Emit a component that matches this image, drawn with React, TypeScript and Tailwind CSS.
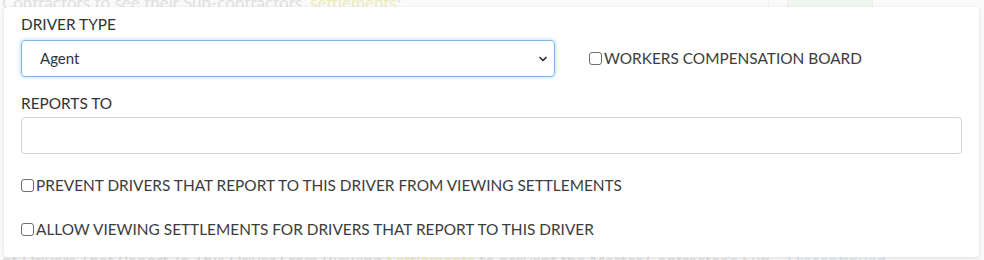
import { ChevronDown } from 'lucide-react';

// Checkbox row used three times in the form.
function CheckRow({ label }: { label: string }) {
  return (
    <label className="flex items-center gap-[2px] text-[15.4px] leading-[18px] text-[#3c3c3c]">
      <span className="inline-block w-[13px] h-[13px] rounded-[3px] border border-[#6e6e6e] bg-white" />
      <span>{label}</span>
    </label>
  );
}

export default function App() {
  return (
    <div
      className="relative w-[984px] h-[260px] overflow-hidden bg-[#fafafa]"
      style={{ fontFamily: 'Lato, "Open Sans", sans-serif' }}
    >
      {/* faded page behind the popover */}
      <div className="absolute left-[2px] top-[-7px] text-[17px] leading-[20px] text-[#e0e0e0] whitespace-nowrap">
        Contractors to see their Sub-contractors' <span className="text-[#eaedbb]">settlements</span>:
      </div>
      <div className="absolute left-[787px] top-[-12px] w-[86px] h-[24px] rounded-md bg-[#eef6f1] border border-[#e4efe8]" />
      <div className="absolute left-[768px] top-0 w-px h-[260px] bg-[#f0f0f0]" />
      <div className="absolute left-[2px] top-[251px] text-[17px] leading-[20px] text-[#e0e0e0] whitespace-nowrap">
        nt Drivers That Report To This Driver From Viewing <span className="text-[#eaedbb]">Settlements</span> to prevent the Master Contractor's Sub
      </div>
      <div className="absolute left-[787px] top-[251px] text-[17px] leading-[20px] text-[#dbe3f0]">Discontinued</div>

      {/* popover card */}
      <div className="absolute left-[4px] top-[7px] w-[975px] h-[250px] bg-white rounded-[4px] shadow-[0_1px_4px_rgba(0,0,0,0.12)] px-[17px] pt-[8px] flex flex-col">
        <div className="flex items-start">
          <div className="w-[534px] flex flex-col">
            <div className="text-[15.4px] leading-[18px] text-[#333] mb-[7px]">DRIVER TYPE</div>
            <div className="h-[37px] rounded-[4px] border border-[#7db6e8] shadow-[0_0_4px_rgba(102,175,233,0.55)] flex items-center pl-[18px] pr-[5px]">
              <span className="flex-1 text-[15px] text-[#333]">Agent</span>
              <ChevronDown className="w-[12px] h-[12px] text-[#333]" strokeWidth={3.5} />
            </div>
          </div>
          <div className="ml-[34px] mt-[34px]">
            <CheckRow label="WORKERS COMPENSATION BOARD" />
          </div>
        </div>

        <div className="text-[15.4px] leading-[18px] text-[#333] mt-[17px] mb-[5px]">REPORTS TO</div>
        <div className="h-[37px] rounded-[4px] border border-[#d2d2d2] bg-white" />

        <div className="mt-[22px]">
          <CheckRow label="PREVENT DRIVERS THAT REPORT TO THIS DRIVER FROM VIEWING SETTLEMENTS" />
        </div>
        <div className="mt-[26px]">
          <CheckRow label="ALLOW VIEWING SETTLEMENTS FOR DRIVERS THAT REPORT TO THIS DRIVER" />
        </div>
      </div>
    </div>
  );
}
